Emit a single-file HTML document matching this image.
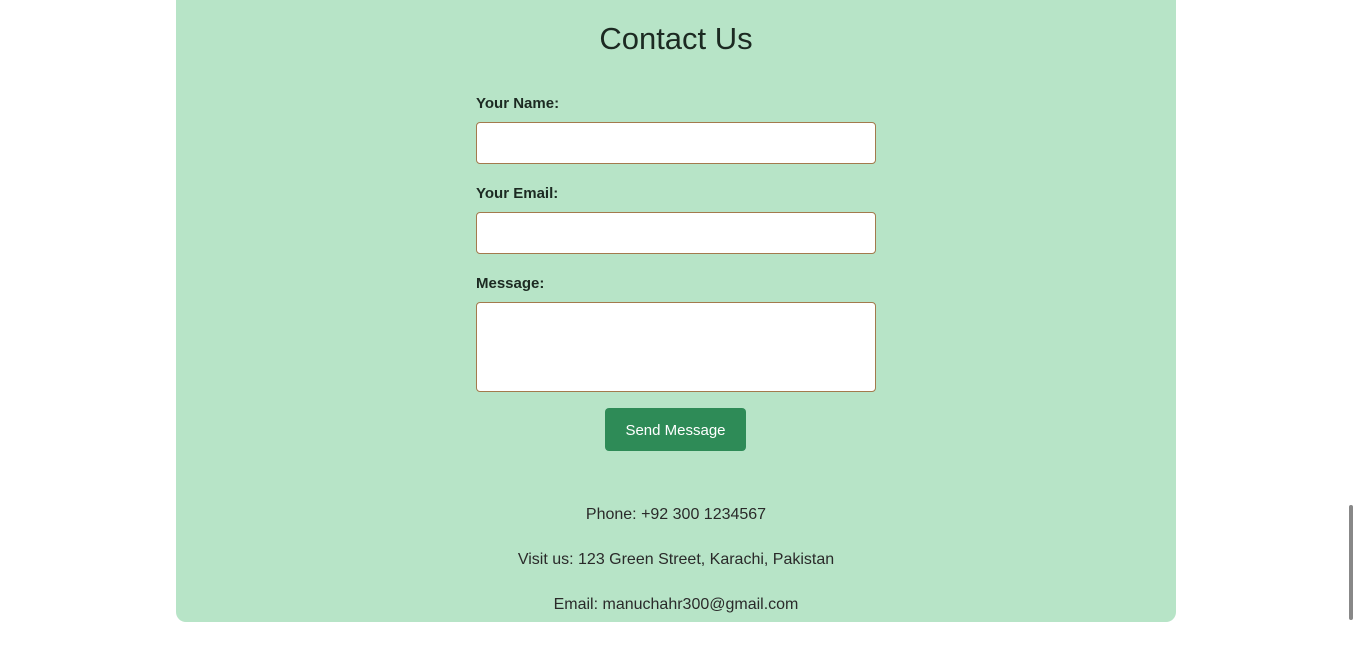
<!DOCTYPE html>
<html><head><style>
body{margin:0;width:1353px;height:648px;background:#fff;overflow:hidden;font-family:"Liberation Sans",sans-serif;position:relative}
.card{position:absolute;left:176px;top:0;width:1000px;height:622px;background:#b7e4c7;border-radius:0 0 10px 10px}
h1{position:absolute;left:0;width:1000px;top:21px;margin:0;text-align:center;font-weight:400;font-size:31px;color:#1c2a22}
.l{position:absolute;left:300px;font-size:15px;font-weight:bold;color:#1c2a22}
.i{position:absolute;left:300px;width:398px;height:40px;border:1px solid #a37a4d;border-radius:4px;background:#fff}
.btn{position:absolute;left:429px;top:408px;width:141px;height:43px;background:#2e8b57;border-radius:4px;color:#fff;font-size:15px;text-align:center;line-height:45px}
.p{position:absolute;left:0;width:1000px;text-align:center;font-size:16px;color:#2a2a2a}
.sb{position:absolute;right:0;top:505px;width:4px;height:115px;background:#888;border-radius:2px}
</style></head><body>
<div class="card">
<h1>Contact Us</h1>
<div class="l" style="top:95px">Your Name:</div>
<div class="i" style="top:122px"></div>
<div class="l" style="top:185px">Your Email:</div>
<div class="i" style="top:212px"></div>
<div class="l" style="top:275px">Message:</div>
<div class="i" style="top:302px;height:88px"></div>
<div class="btn">Send Message</div>
<div class="p" style="top:506px">Phone: +92 300 1234567</div>
<div class="p" style="top:551px">Visit us: 123 Green Street, Karachi, Pakistan</div>
<div class="p" style="top:596px">Email: manuchahr300@gmail.com</div>
</div>
<div class="sb"></div>
</body></html>
